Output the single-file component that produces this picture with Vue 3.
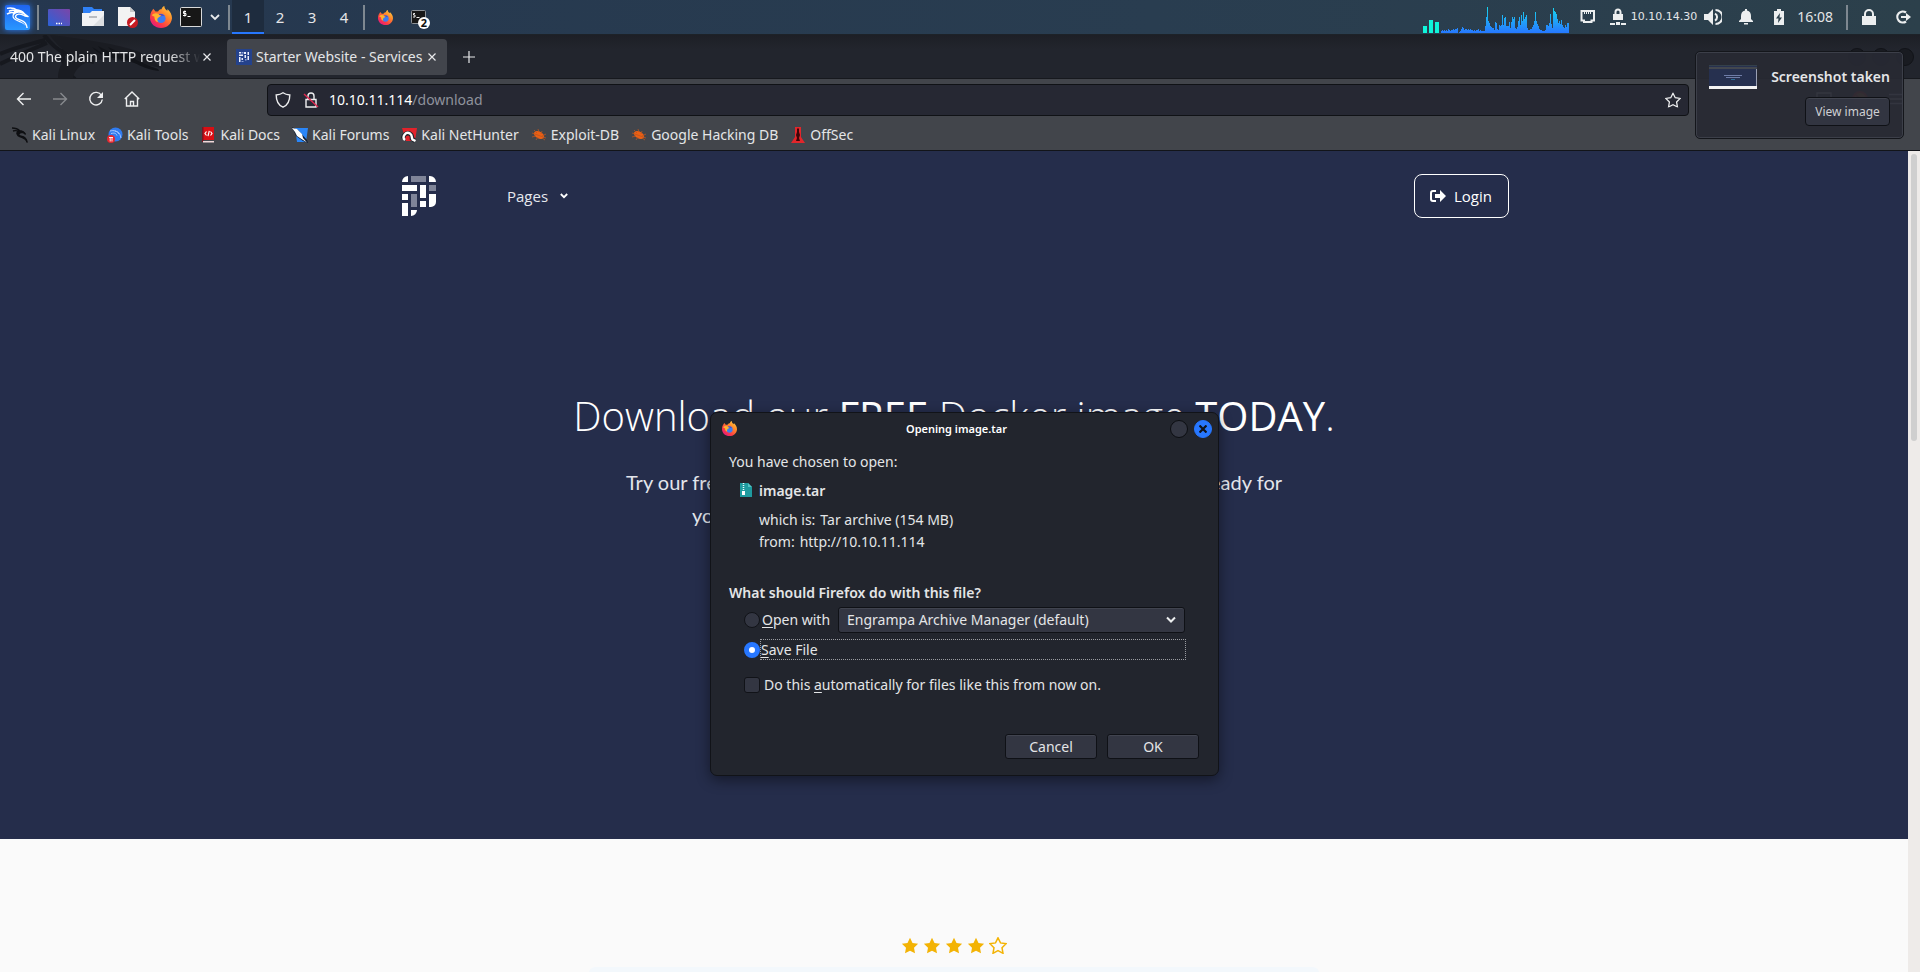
<script setup>
import { ref } from 'vue'

const workspace = ref(1)
const action = ref('save')
const remember = ref(false)
const path = ref('/download')
const handler = ref('Engrampa Archive Manager (default)')

const levels = [7, 13, 11]
const history = [
  2, 3, 2, 3, 2, 3, 2, 4, 3, 2, 3, 3, 4, 3, 4, 4, 5, 0, 1, 2, 4, 6, 5, 3, 4, 4, 3, 4, 3, 4, 3, 3,
  2, 3, 2, 3, 3, 4, 2, 3, 2, 2, 2, 2, 7, 16, 26, 12, 10, 7, 6, 5, 5, 3, 11, 10, 4, 3, 8, 7, 8, 18,
  8, 15, 16, 7, 7, 7, 11, 5, 11, 16, 14, 16, 5, 4, 6, 12, 16, 8, 18, 12, 21, 14, 16, 18, 5, 3, 3, 4,
  4, 6, 8, 12, 21, 12, 9, 7, 4, 3, 3, 2, 2, 2, 3, 8, 8, 7, 10, 19, 9, 5, 25, 22, 21, 19, 14, 10, 12,
  9, 13, 8, 6, 5, 8, 6, 10, 10
]
const graph = history.map((h, i) => `M${i + 18} ${27 - h}h1V27h-1z`).join('')

const bookmarks = [
  { label: 'Kali Linux', icon: 'bm-dragon' },
  { label: 'Kali Tools', icon: 'bm-tools' },
  { label: 'Kali Docs', icon: 'bm-docs' },
  { label: 'Kali Forums', icon: 'bm-forums' },
  { label: 'Kali NetHunter', icon: 'bm-nethunter' },
  { label: 'Exploit-DB', icon: 'bm-bug' },
  { label: 'Google Hacking DB', icon: 'bm-bug' },
  { label: 'OffSec', icon: 'bm-offsec' }
]
</script>

<template>
  <div class="desktop">
    <svg class="defs" width="0" height="0" aria-hidden="true">
      <defs>
        <linearGradient id="fox-body" x1="1" y1="0" x2="0.2" y2="1">
          <stop offset="0" stop-color="#ffe14a" />
          <stop offset="0.4" stop-color="#ff8a2a" />
          <stop offset="0.75" stop-color="#fb3a45" />
          <stop offset="1" stop-color="#e31587" />
        </linearGradient>
        <linearGradient id="spectrum" gradientUnits="userSpaceOnUse" x1="0" y1="2" x2="0" y2="27">
          <stop offset="0" stop-color="#18d4f0" />
          <stop offset="1" stop-color="#2777ff" />
        </linearGradient>
        <linearGradient id="screen" x1="0" y1="1" x2="1" y2="0">
          <stop offset="0" stop-color="#2b62d8" />
          <stop offset="1" stop-color="#7b45a8" />
        </linearGradient>
        <linearGradient id="kali-blue" x1="0" y1="0" x2="0" y2="1">
          <stop offset="0" stop-color="#1f64f0" />
          <stop offset="1" stop-color="#2997ff" />
        </linearGradient>
        <symbol id="firefox" viewBox="0 0 20 20">
          <path fill="url(#fox-body)" d="M3 2.500 5 5h2.300C8.500 3 9.500 3 10.500 3c.3-1.500 1.200-2.500 2.500-3 .2 2.300 1 3 2.700 4.300.2-.5.200-.9.100-1.500C18.500 5.200 20 8 20 11.200 19.400 16.500 15.500 20 10 20S.3 16.500 0 11C0 8 .8 5.600 2 4.200z" />
          <circle cx="10" cy="11.300" r="4.200" fill="#3b7df0" />
          <path fill="#5846b8" d="M7 8.200c2-1.600 5-1.300 6.500.8-2-.4-3.200 0-4 .8z" />
          <path fill="#ffb42e" d="M1.500 8.500C3 6.500 5.500 6 8 7.300c-.3.800 1 1.200 2.500 1.300C9.500 10 8 9.600 7 11.200c-.7 1.300-.3 2.700.8 3.600-2.300-.3-4-2.300-3.700-5z" />
        </symbol>
        <symbol id="dragon" viewBox="0 0 24 24">
          <path fill="none" stroke="currentColor" stroke-width="1.500" stroke-linejoin="round" d="M1 3c4-1 8 0 11 2 M3 6c4-2 7-1 9 1 M1 9c3-2 6-2 8-1 M12 5c3 0 6 2 7.500 4l3.500 2.500c-2 0-4-.5-5-1.500-3-1.500-7-1.500-8 1-.7 3 3 3.500 6 4.500 4 1.300 5.500 4 6 8" />
          <path fill="currentColor" d="M9 4.500c5-1 9.500 2 11 5L17 8.500c-3-1.500-7-1.500-9 2-.5 3.500 4 4.500 7 6 2.500 1.200 4 2.500 5.500 5C18 18.500 15 18 12 16.500c-4-1.700-6-3.500-5-7z" />
        </symbol>
        <symbol id="bm-dragon" viewBox="0 0 16 16">
          <path fill="none" stroke="#0e0f12" stroke-width="1.400" d="M0 1c4 0 6 1 8 3M1 4c3-1 5 0 7 1M8 4c3 0 4 1 5.500 3.500M6 4.500C3 7 7 9 10 9.500c3 .7 4.500 2.500 5 6" />
          <path fill="#0e0f12" d="M7 3.500c3-.5 6 1 7 4-3-2-6-1.500-6.500 0C7 9 11 9 13 10.500 15 12 15.500 14 15.500 16 13 12 11 11.500 8 10.500 4 9 4 6 7 3.500z" />
        </symbol>
        <symbol id="bm-tools" viewBox="0 0 16 16">
          <circle cx="8.500" cy="7.500" r="7" fill="#2f7bf0" />
          <path fill="none" stroke="#a9c9ff" d="M3 4c4-1 7 0 9 3M4 6.500c4-1 5 0 6 2M8 4c5 1 5 4 6 7" />
          <circle cx="4" cy="12" r="4" fill="#e5262e" />
          <path stroke="#fff" stroke-width=".9" d="M2 10.500h4M3.200 10.500v4M5 10.500v4" />
        </symbol>
        <symbol id="bm-docs" viewBox="0 0 16 16">
          <path fill="#d80f14" d="M1 0h12v13H1z" />
          <path fill="#7d1420" d="M1 0h1.500v15H1z" />
          <path fill="#f1d9da" d="M2 14h11v1.500H2z" />
          <path fill="none" stroke="#fff" stroke-width="1.200" d="M5.500 4.500 4 6.500l1.500 2M8.300 3.800 7 9.200M9.500 4.500l1.500 2-1.500 2" />
        </symbol>
        <symbol id="bm-forums" viewBox="0 0 16 16">
          <path fill="#2a86f8" d="M3 1h13l-2 14H5z" />
          <path fill="#101c30" d="M0 0l6 3 9 10 1 3-5-2-7-5z" />
          <path fill="#fff" d="M0 1l5 1 5 5 1 4 4 4.500-5.500-3.500L5 9 3 5z" />
        </symbol>
        <symbol id="bm-nethunter" viewBox="0 0 16 16">
          <path fill="#e2232b" d="M1 1h15l-2 13H5z" />
          <path fill="none" stroke="#20242b" stroke-width="4.500" d="M2 11.500c1-7 9.500-7 9 0l3 2.500" />
          <path fill="none" stroke="#fff" stroke-width="2.400" d="M4 13C0 10 5 4 9 6.500c3 2 1 4 2.500 6l3 1.500" />
        </symbol>
        <symbol id="bm-bug" viewBox="0 0 16 16">
          <ellipse cx="8" cy="8" rx="5.500" ry="3.500" transform="rotate(28 8 8)" fill="#ec5f14" />
          <path stroke="#b8551f" stroke-width=".8" d="M1 6l14 5M3 3l3 3M7 2l1 3M11 4l-1 3M1 10l4-1M5 13l2-3M14 13l-3-2M15 7l-4 2" />
        </symbol>
        <symbol id="bm-offsec" viewBox="0 0 16 16">
          <path fill="#e2262b" d="M5 0h6v10l4 6H1l4-6z" />
          <path fill="#3c0508" d="M7 1.500h2V5l1 3-1 3 1 3H6l1-3-1-3 1-3z" />
        </symbol>
        <symbol id="star" viewBox="0 0 18 17">
          <path d="M9 .8l2.500 5.100 5.600.8-4.100 4 1 5.600L9 13.700l-5 2.600 1-5.600-4.100-4 5.600-.8z" />
        </symbol>
      </defs>
    </svg>

    <header class="panel">
      <button class="launcher" aria-label="Applications">
        <svg width="32" height="32" viewBox="0 0 32 32">
          <rect x="4" y="4" width="25" height="25" rx="2" fill="url(#kali-blue)" />
          <use href="#dragon" x="5" y="4" width="23" height="24" />
        </svg>
      </button>
      <i class="rule"></i>
      <nav class="shortcuts" aria-label="Launchers">
        <button aria-label="Show desktop">
          <svg width="22" height="22" viewBox="0 0 22 22"><rect y="3" width="22" height="17" rx="1" fill="url(#screen)" /><path stroke="#fff" stroke-width="1.500" stroke-dasharray="1.500 1" d="M8 17.500h6" /></svg>
        </button>
        <button aria-label="Files">
          <svg width="22" height="22" viewBox="0 0 22 22"><path fill="#2f80f5" d="M1 1h9l2 2h8v5H1z" /><path fill="#f1f2f4" d="M0 7h8l2-2h12v15H0z" /><path fill="#dcdee1" d="M22 9v11H11z" /><path stroke="#b9bcc1" stroke-width="2" d="M7 11h8" /></svg>
        </button>
        <button aria-label="Text editor">
          <svg width="22" height="22" viewBox="0 0 22 22"><path fill="#f3f3f3" d="M2 1h12l5 5v14H2z" /><path fill="#c9c9c9" d="M14 1l5 5h-5z" /><circle cx="16.500" cy="16.500" r="5.500" fill="#c61b22" /><path stroke="#fff" stroke-width="2" d="M14 19l5-5" /></svg>
        </button>
        <button aria-label="Firefox"><svg width="22" height="22"><use href="#firefox" width="22" height="22" /></svg></button>
        <button class="term" aria-label="Terminal">
          <svg width="22" height="22" viewBox="0 0 22 22"><rect x=".5" y="1.500" width="21" height="19" rx="1" fill="#171717" stroke="#d9dadb" /><path fill="none" stroke="#fff" d="M6 5.500H3.500v2H6v2H3M4.800 4.500v6M7.500 10.500h3" /></svg>
        </button>
        <button class="more" aria-label="More terminals">
          <svg width="10" height="10" viewBox="0 0 10 10"><path fill="none" stroke="#e8eaec" stroke-width="1.800" d="M1 3l4 4 4-4" /></svg>
        </button>
      </nav>
      <i class="rule"></i>
      <nav class="spaces" aria-label="Workspaces">
        <button v-for="n in 4" :key="n" :class="{ on: workspace === n }" @click="workspace = n">{{ n }}</button>
      </nav>
      <i class="rule"></i>
      <div class="tasks">
        <button aria-label="Firefox window"><svg width="15" height="15"><use href="#firefox" width="15" height="15" /></svg></button>
        <button class="group" aria-label="Terminal windows">
          <svg width="15" height="15" viewBox="0 0 15 15"><rect x=".5" y=".5" width="14" height="13" rx="1" fill="#171717" stroke="#8c9197" /><path fill="none" stroke="#eee" d="M4 3.500H2.500v1.500H4v2H2M5.500 7.500h3" /></svg>
          <span class="count">2</span>
        </button>
      </div>

      <div class="tray">
        <svg class="chart" width="146" height="27" viewBox="0 0 146 27" aria-label="Processor load">
          <rect v-for="(h, i) in levels" :key="i" :x="i * 6" :y="27 - h" width="4" :height="h" fill="#0ff5da" />
          <path :d="graph" fill="url(#spectrum)" />
        </svg>
        <svg class="net" width="16" height="16" viewBox="0 0 16 16"><path fill="none" stroke="#eceeef" stroke-width="2" d="M1.500 2h12.500v9.500h-2.500V13H4v-1.500H1.500z" /><path stroke="#eceeef" d="M4.500 2v3M6.500 2v3M8.500 2v3M10.500 2v3" /></svg>
        <span class="vpn">
          <svg width="16" height="18" viewBox="0 0 16 18"><path fill="#eceeef" d="M3 6h10v6H3zM0 15h5v2H0zM6 14h4v3H6zM11 15h5v2h-5z" /><path fill="none" stroke="#eceeef" stroke-width="2" d="M5.500 7V4a2.500 2.500 0 0 1 5 0v3" /></svg>
          <span>10.10.14.30</span>
        </span>
        <svg class="volume" width="18" height="18" viewBox="0 0 18 18"><path fill="#eceeef" d="M0 6h4l5-5v16l-5-5H0z" /><path fill="none" stroke="#eceeef" stroke-width="2" d="M11 5.500a4 4 0 0 1 0 7M11.500 2a7 7 0 0 1 0 14" /></svg>
        <svg class="bell" width="14" height="16" viewBox="0 0 14 16"><path fill="#eceeef" d="M6 0h2v1.500c3 .5 4 3 4 5.500v3l2 2v1H0v-1l2-2V7c0-2.500 1-5 4-5.500zM5 14h4v1.500H5z" /></svg>
        <svg class="battery" width="12" height="16" viewBox="0 0 12 16"><path fill="#eceeef" d="M4 0h4v2h3v14H1V2h3z" /><path fill="#2b3f4b" d="M7 4 3 9.500h2.500L5 14l4-5.500H6.500z" /></svg>
        <time>16:08</time>
        <i class="rule"></i>
        <svg class="lock" width="14" height="16" viewBox="0 0 14 16"><path fill="#eceeef" d="M0 7h14v9H0z" /><path fill="none" stroke="#eceeef" stroke-width="2" d="M3 8V5a4 4 0 0 1 8 0v3" /></svg>
        <svg class="logout" width="16" height="16" viewBox="0 0 16 16"><path fill="none" stroke="#eceeef" stroke-width="2.200" d="M11 3.500A5.500 5.500 0 1 0 11 12.500M6 8h7" /><path fill="#eceeef" d="M11 4l5 4-5 4z" /></svg>
      </div>
    </header>

    <section class="browser">
      <div class="tabs">
        <svg class="art" width="170" height="44" viewBox="0 0 170 44" aria-hidden="true">
          <path fill="none" stroke="#16181e" stroke-width="4" d="M0 19C15 12 32 9 45 5M0 29C18 20 32 14 47 8M44 0c14 18 22 20 50 27M75 44c-8-6-14-14-12-30" />
          <path fill="#1a1c22" d="M50 0c35 4 70 10 87 16 14 6 17 11 25 17-22-4-34-7-47-8-22-2-38 2-42 18H58c0-12 6-19 14-22C62 15 55 8 50 0z" />
          <path fill="#121419" d="M92 12l12 7-6-8 16 8-6-7 18 8c8 3 14 8 32 14l1 2c-18-2-24-10-36-12-12-1-24-3-31-12z" />
        </svg>
        <div class="tab">
          <span class="name fade">400 The plain HTTP request was sent</span>
          <button aria-label="Close tab"><svg width="8" height="8" viewBox="0 0 8 8"><path d="M.5.5l7 7M7.500.5l-7 7" /></svg></button>
        </div>
        <div class="tab active">
          <svg class="fav" width="16" height="16" viewBox="0 0 16 16"><path fill="#24428c" d="M0 0h16v16H0z" /><path fill="#e9eefb" d="M3 3h2v1.500H3zM8 3h2v2H8zM11.500 3H13v3h-1.500zM3 5.500h4V7H3zM8.500 6H10v3H8.500zM3 8h1.500v5H3zM5.500 9H7v2H5.500zM11.500 7H13v4h-1.500z" /><path fill="#8ba0d6" d="M5.500 3h2v1.500h-2zM5.500 12h2v1h-2zM9 10h1.500v1.500H9z" /></svg>
          <span class="name">Starter Website - Services</span>
          <button aria-label="Close tab"><svg width="8" height="8" viewBox="0 0 8 8"><path d="M.5.5l7 7M7.500.5l-7 7" /></svg></button>
        </div>
        <button class="plus" aria-label="New tab"><svg width="12" height="12" viewBox="0 0 12 12"><path d="M6 0v12M0 6h12" /></svg></button>
        <div class="controls"><button aria-label="Minimise"></button><button aria-label="Maximise"></button><button aria-label="Close"></button></div>
      </div>

      <div class="toolbar">
        <button aria-label="Back"><svg width="16" height="16" viewBox="0 0 16 16"><path d="M15 8H1.500M7.500 2l-6 6 6 6" /></svg></button>
        <button class="off" aria-label="Forward" disabled><svg width="16" height="16" viewBox="0 0 16 16"><path d="M1 8h13.500M8.500 2l6 6-6 6" /></svg></button>
        <button aria-label="Reload"><svg width="16" height="16" viewBox="0 0 16 16"><path d="M13.500 4.500A6.300 6.300 0 1 0 14.300 8.500" /><path class="solid" d="M15 1v6H9z" /></svg></button>
        <button aria-label="Home"><svg width="16" height="16" viewBox="0 0 16 16"><path d="M.8 8 8 1l7.200 7M2.500 7v8h11V7M6.500 15v-4.500h3V15" /></svg></button>
        <div class="address">
          <svg width="16" height="16" viewBox="0 0 16 16"><path d="M8 .8C6 2.200 3.500 2.800 1.200 3c0 5.500 1.500 10 6.800 12.200C13.300 13 14.800 8.500 14.800 3 12.500 2.800 10 2.200 8 .8z" /></svg>
          <svg class="insecure" width="16" height="16" viewBox="0 0 16 16"><path d="M3 7.500h10V15H3zM5 7V4a3 3 0 0 1 6 0v3" /><path class="slash" d="M1 2l14 13" /></svg>
          <label for="url">10.10.11.114</label><input id="url" v-model="path" type="text" />
          <svg class="save" width="16" height="16" viewBox="0 0 18 17"><use href="#star" width="18" height="17" /></svg>
        </div>
        <div class="extras">
          <svg width="16" height="16" viewBox="0 0 16 16"><path d="M1 2h14v5a7 7 0 0 1-14 0zM4.500 6 8 9.500 11.500 6" /></svg>
          <svg width="16" height="16" viewBox="0 0 16 16"><circle cx="8" cy="8" r="7" fill="#d98a2b" stroke="#d0342c" stroke-width="2" /><path stroke="#d0342c" d="M3 3l10 10" /></svg>
          <svg width="16" height="16" viewBox="0 0 16 16"><path d="M1 3.500h14M1 8h14M1 12.500h14" /></svg>
        </div>
      </div>

      <nav class="bookmarks" aria-label="Bookmarks">
        <a v-for="b in bookmarks" :key="b.label" href="#"><svg width="16" height="16"><use :href="'#' + b.icon" width="16" height="16" /></svg>{{ b.label }}</a>
      </nav>

      <main class="viewport">
        <div class="site">
          <div class="hero">
            <div class="bar">
              <a href="#" class="brand" aria-label="Home">
                <svg width="34" height="40" viewBox="0 0 34 40">
                  <path fill="#fff" d="M0 6a6 6 0 0 1 6-6v6zM27 0h1a6 6 0 0 1 6 6h-7zM0 9h15v6H0zM18 9h6v13h-6zM0 18h6v6H0zM27 18h7v8a5 5 0 0 1-5 5h-2zM18 25h6v6h-6zM0 27h6v13H0zM9 34h6a6 6 0 0 1-6 6z" />
                  <path fill="#7f8498" d="M9 0h15v6H9zM27 9h7v6h-7zM9 18h6v13H9z" />
                </svg>
              </a>
              <a href="#" class="pages">Pages <svg width="8" height="6" viewBox="0 0 8 6"><path fill="none" stroke="#fff" stroke-width="1.800" d="M.8 1 4 4.200 7.200 1" /></svg></a>
              <a href="#" class="login"><svg width="16" height="12" viewBox="0 0 16 12"><path fill="none" stroke="#fff" stroke-width="2" d="M6 1H3a2 2 0 0 0-2 2v6a2 2 0 0 0 2 2h3" /><path fill="#fff" d="M5 4h5V0l6 6-6 6V8H5z" /></svg>Login</a>
            </div>
            <h1>Download our <b>FREE</b> Docker image <b>TODAY</b>.</h1>
            <p class="lead"><span>Try our free</span><span>ready for</span></p>
            <p class="lead second"><span>you</span></p>
          </div>
          <div class="reviews">
            <div class="stars" role="img" aria-label="4 out of 5 stars">
              <svg v-for="n in 5" :key="n" :class="{ hollow: n === 5 }" width="18" height="17" viewBox="0 0 18 17"><use href="#star" width="18" height="17" /></svg>
            </div>
            <div class="card"></div>
          </div>
        </div>
        <div class="scroll"><i></i></div>
      </main>
    </section>

    <form class="dialog" role="dialog" aria-labelledby="dlg-title" @submit.prevent>
      <header>
        <svg width="15" height="15"><use href="#firefox" width="15" height="15" /></svg>
        <h2 id="dlg-title">Opening image.tar</h2>
        <button type="button" class="dot" aria-label="Maximise"></button>
        <button type="button" class="dot close" aria-label="Close"><svg width="8" height="8" viewBox="0 0 8 8"><path stroke="#10131a" stroke-width="2.200" d="M.5.5l7 7M7.500.5l-7 7" /></svg></button>
      </header>
      <p>You have chosen to open:</p>
      <div class="file">
        <svg width="12" height="16" viewBox="0 0 12 16"><path fill="#1f9a9e" d="M0 0h8l4 4v10H0z" /><path fill="#53c4c4" d="M8 0l4 4H8z" /><path stroke="#e8ffff" stroke-width="1.500" stroke-dasharray="1 1" d="M3.500 0v8" /><path fill="#fff" d="M2 8h3v4H2z" /></svg>
        <strong>image.tar</strong>
      </div>
      <dl>
        <div><dt>which is:</dt><dd>Tar archive (154 MB)</dd></div>
        <div><dt>from:</dt><dd>http://10.10.11.114</dd></div>
      </dl>
      <fieldset>
        <legend>What should Firefox do with this file?</legend>
        <div class="choice with">
          <input id="open" v-model="action" type="radio" name="action" value="open" />
          <label for="open"><u>O</u>pen with</label>
          <span class="picker">
            <select v-model="handler" aria-label="Open with"><option>Engrampa Archive Manager (default)</option></select>
            <svg width="10" height="8" viewBox="0 0 10 8"><path fill="none" stroke="#eceeef" stroke-width="2" d="M1 1.500l4 4 4-4" /></svg>
          </span>
        </div>
        <div class="choice keep">
          <input id="save" v-model="action" type="radio" name="action" value="save" />
          <label for="save" class="focus"><u>S</u>ave File</label>
        </div>
        <div class="choice auto">
          <input id="auto" v-model="remember" type="checkbox" />
          <label for="auto">Do this <u>a</u>utomatically for files like this from now on.</label>
        </div>
      </fieldset>
      <footer><button type="button">Cancel</button><button type="submit">OK</button></footer>
    </form>

    <aside class="toast" role="status">
      <svg width="48" height="24" viewBox="0 0 48 24"><path fill="#26304f" d="M0 0h48v24H0z" /><path fill="#34404a" d="M0 0h48v1H0z" /><path fill="#43474e" d="M0 2h48v2H0z" /><path fill="#f3f3f3" d="M0 21h48v3H0z" /><path fill="#9aa0b4" d="M47 4h1v17h-1z" /><path stroke="#6f7da8" d="M15 10.500h18M17 12.500h14" /><path fill="#2d6f99" d="M22 14h4v1h-4z" /></svg>
      <div><strong>Screenshot taken</strong><button type="button">View image</button></div>
    </aside>
  </div>
</template>

<style>
body { background: #22252d; }
</style>

<style scoped>
* { box-sizing: border-box; }
.desktop {
  position: relative;
  display: flex;
  flex-direction: column;
  height: 100vh;
  overflow: hidden;
  color: #e4e5e7;
  font: 14px/20px "Noto Sans", sans-serif;
}
.defs { position: absolute; }
button { padding: 0; border: 0; background: none; color: inherit; font: inherit; display: flex; align-items: center; justify-content: center; }
a { color: inherit; text-decoration: none; }
svg { flex: none; display: block; }
h1, h2, p, dl, dd, dt { margin: 0; }
strong { font-weight: 600; }

.panel {
  display: flex;
  align-items: center;
  height: 35px;
  background: linear-gradient(90deg, #25374f, #293d50 60%, #2c404b);
  border-bottom: 1px solid #1d2228;
}
.launcher { width: 37px; color: #fff; padding-right: 4px; filter: drop-shadow(0 0 3px #2a7fff); }
.rule { width: 2px; height: 25px; background: #7e8891; flex: none; }
.shortcuts { display: flex; align-items: center; gap: 12px; margin: 0 8px 0 9px; }
.shortcuts .term, .shortcuts .more { margin-left: -4px; }
.spaces { display: flex; align-self: stretch; margin: 0 3px 0 2px; }
.spaces button { width: 32px; font-size: 15px; border-bottom: 2px solid transparent; border-top: 2px solid transparent; }
.spaces .on { background: #1e2c3e; border-bottom-color: #2777ff; }
.tasks { display: flex; gap: 18px; margin-left: 13px; }
.group { position: relative; }
.count { position: absolute; left: 7px; top: 7px; width: 12px; height: 12px; border-radius: 6px; background: #fff; color: #111; font: bold 11px/12px "Noto Sans", sans-serif; text-align: center; }
.tray { display: flex; align-items: center; margin-left: auto; padding-right: 9px; }
.chart { align-self: flex-end; margin: 4px 11px 0 0; }
.net { margin-right: 14px; }
.vpn { display: flex; align-items: center; gap: 5px; margin-right: 7px; font: 11px/16px "DejaVu Sans", sans-serif; }
.volume { margin-right: 17px; }
.bell { margin-right: 20px; }
.battery { margin-right: 12px; }
.tray time { margin-right: 13px; }
.lock { margin: 0 19px 0 14px; }

.browser { flex: 1; min-height: 0; display: flex; flex-direction: column; }
.tabs { position: relative; display: flex; align-items: center; height: 44px; padding-top: 1px; background: linear-gradient(#1d1f26, #22252d 14px); border-bottom: 1px solid #17191e; }
.art { position: absolute; left: 0; top: 0; }
.tab { position: relative; display: flex; align-items: center; height: 36px; padding: 0 11px 0 10px; border-radius: 4px; }
.tab .name { width: 190px; overflow: hidden; white-space: nowrap; }
.tab .fade { mask-image: linear-gradient(90deg, #000 160px, transparent 190px); }
.tab button { margin-left: 3px; }
.tab button svg, .plus svg { stroke: #e8e9eb; stroke-width: 1.200; }
.active { margin-left: 5px; background: #42454c; padding-left: 9px; }
.active .name { width: 169px; }
.fav { margin-right: 4px; }
.tab.active button { margin-left: 3px; }
.plus { margin-left: 16px; }
.controls { display: flex; gap: 6px; margin-left: auto; padding-right: 6px; }
.controls button { width: 18px; height: 18px; border-radius: 9px; background: #191b21; border: 1px solid #111318; }

.toolbar { display: flex; align-items: center; height: 40px; padding: 0 16px 0 6px; background: #42454b; }
.toolbar > button { width: 36px; height: 32px; }
.toolbar svg { fill: none; stroke: #eeeff0; stroke-width: 1.400; }
.toolbar .off { opacity: .4; }
.toolbar .solid { fill: #eeeff0; stroke: none; }
.address { flex: 1; display: flex; align-items: center; height: 32px; margin: 2px 0 0 117px; padding: 0 7px; background: #262833; border: 1px solid #101216; border-radius: 4px; }
.insecure { margin: 0 10px 0 12px; }
.toolbar .slash { stroke: #e22850; }
.address label { color: #fff; }
.address input { flex: 1; min-width: 0; padding: 0; border: 0; outline: 0; background: none; color: #8f929c; font: inherit; }
.extras { display: flex; gap: 20px; margin-left: 127px; }
.bookmarks { display: flex; align-items: center; gap: 12px; height: 32px; padding: 0 12px; background: #42454b; border-bottom: 1px solid #121419; }
.bookmarks a { display: flex; align-items: center; gap: 4px; white-space: nowrap; }

.viewport { flex: 1; min-height: 0; display: flex; background: #fafafa; }
.site { flex: 1; overflow: hidden; color: #fff; }
.hero { height: 688px; padding-top: 23px; background: #252d4b; }
.bar { display: flex; align-items: center; max-width: 1140px; margin: 0 auto; padding: 0 15px 0 18px; height: 44px; font: 15px/24px "Open Sans", sans-serif; }
.pages { display: flex; align-items: center; gap: 12px; margin-left: 71px; color: #e6e8ee; }
.login { display: flex; align-items: center; gap: 8px; height: 44px; margin-left: auto; padding: 0 16px 0 15px; border: 1px solid #fff; border-radius: 8px; }
h1 { margin-top: 172px; text-align: center; font: 300 40px/52px "Open Sans", sans-serif; }
h1 b { font-weight: 500; }
.lead { display: flex; justify-content: space-between; width: 656px; max-width: 100%; margin: 24px auto 0; color: #e3e5ec; font: 20px/33px Lato, sans-serif; }
.second { width: 524px; margin-top: 0; }
.reviews { padding-top: 98px; }
.stars { display: flex; justify-content: center; gap: 4px; fill: #f3b304; }
.stars .hollow { fill: none; stroke: #f3b304; stroke-width: 1.500; }
.card { max-width: 730px; height: 200px; margin: 13px auto 0; border-radius: 6px; background: #f3f8fc; }
.scroll { width: 12px; padding: 3px; background: #eeebe9; }
.scroll i { display: block; height: 287px; border-radius: 3px; background: #cfcfcf; }

.dialog { position: absolute; left: calc(50% - 250px); top: 412px; width: 509px; height: 364px; padding: 0 19px 0 18px; background: #22252d; border: 1px solid #111318; border-radius: 7px; box-shadow: 0 4px 14px rgba(0, 0, 0, .45); }
.dialog header { display: flex; align-items: center; height: 31px; margin: 0 -13px 8px -7px; }
.dialog h2 { flex: 1; padding-left: 12px; text-align: center; font: 600 11px/16px "Noto Sans", sans-serif; color: #fff; }
.dot { width: 18px; height: 18px; margin-left: 6px; border: 1px solid #0c0e12; border-radius: 9px; background: #333642; }
.dot.close { background: #2777ff; border-color: #2777ff; }
.file { display: flex; align-items: center; gap: 7px; margin: 9px 0 8px 11px; }
dl { margin-left: 30px; }
dl div { display: flex; gap: 5px; line-height: 22px; }
fieldset { margin: 30px 0 0; padding: 0; border: 0; }
legend { padding: 0; font-weight: 600; line-height: 20px; }
.choice { display: flex; align-items: center; margin-left: 15px; white-space: nowrap; }
.choice input { appearance: none; flex: none; width: 16px; height: 16px; margin: 0 2px 0 0; border: 1px solid #111318; border-radius: 8px; background: #333642; }
.choice input[type="radio"]:checked { border: 5px solid #2777ff; background: #fff; }
.choice input[type="checkbox"] { margin-right: 4px; border-radius: 3px; }
.choice u { text-underline-offset: 2px; }
.with { height: 28px; margin-top: 3px; }
.picker { position: relative; flex: 1; margin: 0 14px 0 8px; }
.picker select { appearance: none; display: block; width: 100%; height: 26px; padding: 0 8px; border: 1px solid #0f1116; border-radius: 3px; background: #333642; box-shadow: inset 0 1px #41444f; color: inherit; font: inherit; }
.picker svg { position: absolute; right: 9px; top: 9px; }
.keep { margin-top: 5px; }
.choice.keep input { margin-right: 0; }
.focus { flex: 1; margin-right: 13px; border: 1px dotted #9a9ca1; line-height: 19px; }
.auto { margin-top: 15px; }
.dialog footer { display: flex; justify-content: flex-end; gap: 10px; margin-top: 39px; }
.dialog footer button { width: 92px; height: 25px; border: 1px solid #0f1116; border-radius: 3px; background: #333642; box-shadow: inset 0 1px #41444f; }

.toast { position: absolute; right: 16px; top: 51px; width: 209px; height: 88px; display: flex; justify-content: space-between; padding: 13px 13px 12px; background: rgba(39, 41, 51, .94); border: 1px solid #14161b; border-radius: 5px; box-shadow: inset 0 0 0 1px #3c3f49; }
.toast div { display: flex; flex-direction: column; align-items: flex-end; gap: 8px; }
.toast strong { line-height: 24px; }
.toast button { width: 85px; height: 30px; border: 1px solid #0f1116; border-radius: 4px; background: rgba(51, 54, 66, .9); box-shadow: inset 0 1px #41444f; font-size: 12px; color: #cfd0d3; }
</style>
